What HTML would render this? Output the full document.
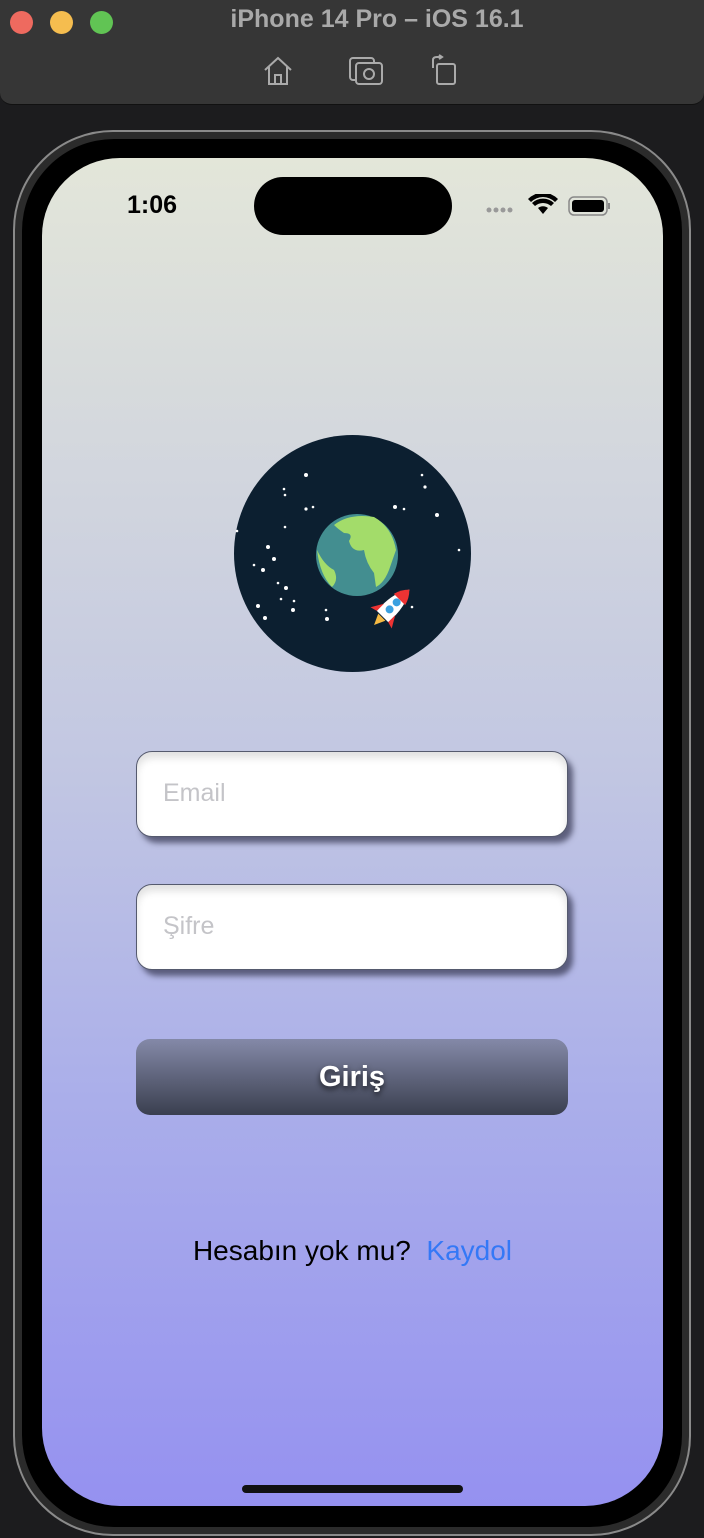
<!DOCTYPE html>
<html><head><meta charset="utf-8"><style>
*{margin:0;padding:0;box-sizing:border-box}
body{width:704px;height:1538px;background:#1c1c1e;position:relative;overflow:hidden;font-family:"Liberation Sans",sans-serif}
.bar{position:absolute;left:0;top:0;width:704px;height:105px;background:#363636;border-radius:0 0 12px 12px;border-bottom:1px solid #111}
.dot{position:absolute;top:11px;width:23px;height:23px;border-radius:50%}
.title{position:absolute;top:5px;left:0;width:704px;text-align:center;color:#a9a9a9;font-weight:bold;font-size:25px;padding-left:50px}
.phone{position:absolute;left:13px;top:130px;width:678px;height:1406px;border-radius:100px;background:#2b2b2b;border:2px solid #8a8a8a}
.bezel{position:absolute;left:22px;top:139px;width:660px;height:1388px;border-radius:92px;background:#000}
.screen{position:absolute;left:42px;top:158px;width:621px;height:1348px;border-radius:78px;background:linear-gradient(#e3e6d9,#c2c7e2 45%,#aaaeea 70%,#9591f0);overflow:hidden}
.island{position:absolute;left:212px;top:19px;width:198px;height:58px;border-radius:29px;background:#000}
.time{position:absolute;left:85px;top:33px;font-size:25px;font-weight:bold;color:#000}
.field{position:absolute;left:94px;width:432px;height:86px;background:#fff;border:1.5px solid #555a6e;border-radius:16px;box-shadow:5px 6px 6px rgba(60,62,90,.75),inset 0 6px 8px rgba(0,0,0,.12);color:#c4c4c8;font-size:25px;padding:27px 0 0 26px}
.btn{position:absolute;left:94px;top:881px;width:432px;height:76px;border-radius:14px;background:linear-gradient(#8489a8,#3a3f4f);color:#fff;font-weight:bold;font-size:29px;text-align:center;line-height:76px;text-shadow:0 3px 6px rgba(0,0,0,.7)}
.foot{position:absolute;left:0;width:621px;top:1077px;text-align:center;font-size:28px;color:#000}
.home{position:absolute;left:200px;top:1327px;width:221px;height:8px;border-radius:4px;background:#111}
</style></head><body>
<div class="bar">
<div class="dot" style="left:10px;background:#ee6a5f"></div>
<div class="dot" style="left:50px;background:#f5bd4f"></div>
<div class="dot" style="left:90px;background:#61c454"></div>
<div class="title">iPhone 14 Pro – iOS 16.1</div>
<svg style="position:absolute;left:262px;top:56px" width="32" height="30" viewBox="0 0 32 30" fill="none" stroke="#aaa" stroke-width="2"><path d="M3 14 L16 2 L29 14 M7 11 V28 H25 V11 M13 28 V19 H19 V28"/></svg>
<svg style="position:absolute;left:348px;top:56px" width="36" height="30" viewBox="0 0 36 30" fill="none" stroke="#aaa" stroke-width="2"><rect x="2" y="2" width="24" height="22" rx="3"/><rect x="8" y="7" width="26" height="21" rx="3" fill="#363636"/><circle cx="21" cy="18" r="5"/></svg>
<svg style="position:absolute;left:428px;top:54px" width="32" height="32" viewBox="0 0 32 32" fill="none" stroke="#aaa" stroke-width="2"><rect x="9" y="10" width="18" height="20" rx="2"/><path d="M5 14 V6 Q5 3 9 3 H13 M11 1 L14 3 L11 5"/></svg>
</div>
<div class="phone"></div>
<div class="bezel"></div>
<div class="screen">
<div class="island"></div>
<div class="time">1:06</div>
<svg style="position:absolute;left:444px;top:36px" width="126" height="24" viewBox="0 0 126 24">
<g fill="#999"><circle cx="3" cy="16" r="2.5"/><circle cx="10" cy="16" r="2.5"/><circle cx="17" cy="16" r="2.5"/><circle cx="24" cy="16" r="2.5"/></g>
<path d="M57 20 L52 14 A8 8 0 0 1 62 14 Z M46 9 A16 16 0 0 1 68 9 L65 12 A12 12 0 0 0 49 12Z M42 5 A21 21 0 0 1 72 5 L69 8 A17 17 0 0 0 45 8Z" fill="#000"/>
<rect x="83" y="3" width="38" height="18" rx="5" fill="none" stroke="#888" stroke-width="1.5"/><rect x="86" y="6" width="32" height="12" rx="3" fill="#000"/><rect x="122" y="9" width="2" height="6" fill="#888"/>
</svg>
<svg style="position:absolute;left:192px;top:277px" width="237" height="237" viewBox="0 0 237 237">
<circle cx="118.5" cy="118.5" r="118.5" fill="#0c1f30"/>
<g fill="#fff"><circle cx="72" cy="40" r="2"/><circle cx="50" cy="54" r="1.3"/><circle cx="51" cy="60" r="1.3"/><circle cx="72" cy="74" r="1.6"/><circle cx="79" cy="72" r="1.3"/><circle cx="51" cy="92" r="1.3"/><circle cx="3" cy="96" r="1.3"/><circle cx="34" cy="112" r="2"/><circle cx="40" cy="124" r="2"/><circle cx="20" cy="130" r="1.3"/><circle cx="29" cy="135" r="2"/><circle cx="44" cy="148" r="1.3"/><circle cx="52" cy="153" r="2"/><circle cx="47" cy="164" r="1.3"/><circle cx="60" cy="166" r="1.3"/><circle cx="59" cy="175" r="2"/><circle cx="24" cy="171" r="2"/><circle cx="31" cy="183" r="2"/><circle cx="92" cy="175" r="1.3"/><circle cx="93" cy="184" r="2"/><circle cx="161" cy="72" r="2"/><circle cx="170" cy="74" r="1.3"/><circle cx="188" cy="40" r="1.3"/><circle cx="191" cy="52" r="1.6"/><circle cx="203" cy="80" r="2"/><circle cx="225" cy="115" r="1.3"/><circle cx="178" cy="172" r="1.3"/></g>
<circle cx="123" cy="120" r="41" fill="#438e90"/>
<path d="M100 90 Q115 78 140 82 Q158 92 162 115 L155 135 Q150 148 142 152 L140 138 Q132 128 130 115 Q118 118 115 106 Q120 98 110 98 Q104 94 100 90Z M83 115 Q90 130 100 135 Q105 145 98 152 Q86 140 83 115Z" fill="#a3dc6a"/>
<g transform="translate(157 173) rotate(45)"><path d="M0 -26 Q10 -12 8 12 H-8 Q-10 -12 0 -26Z" fill="#fff"/><path d="M0 -26 Q6 -20 8 -12 H-8 Q-6 -20 0 -26Z" fill="#e33"/><path d="M-8 2 L-15 14 L-8 12Z M8 2 L15 14 L8 12Z" fill="#e33"/><path d="M-5 13 L0 24 L5 13Z" fill="#f5b942"/><circle cx="0" cy="-8" r="4" fill="#3aa0e0"/><circle cx="0" cy="2" r="4" fill="#3aa0e0"/></g>
</svg>
<div class="field" style="top:593px">Email</div>
<div class="field" style="top:726px">Şifre</div>
<div class="btn">Giriş</div>
<div class="foot">Hesabın yok mu?&nbsp; <span style="color:#3478f6">Kaydol</span></div>
<div class="home"></div>
</div>
</body></html>
